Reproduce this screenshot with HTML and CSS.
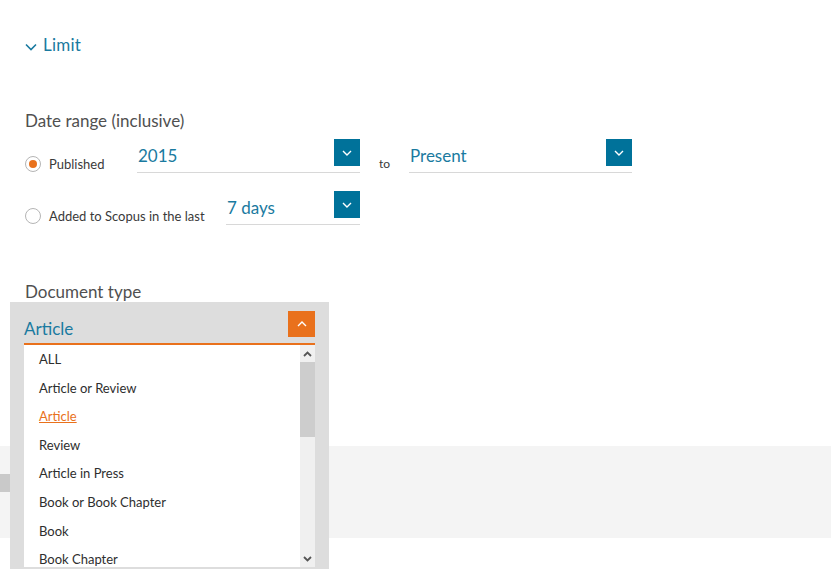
FILE: index.html
```html
<!DOCTYPE html>
<html lang="en">
<head>
<meta charset="utf-8">
<title>Limit</title>
<link rel="stylesheet" href="styles.css">
</head>
<body>
<div class="wrap">
  <div class="limit">
    <svg class="limit-chev" width="12" height="8" viewBox="0 0 12 8"><path d="M1 1.5 L6 6.5 L11 1.5" fill="none" stroke="#1a7aa0" stroke-width="1.6"/></svg>
    <span>Limit</span>
  </div>

  <div class="section-title date-title">Date range (inclusive)</div>

  <div class="row row-first">
    <span class="radio radio-on"></span>
    <span class="radio-label label-published">Published</span>
    <div class="select select-year">
      <span class="select-value">2015</span>
      <span class="select-btn"><svg width="10" height="6" viewBox="0 0 10 6"><path d="M1 1 L5 5 L9 1" fill="none" stroke="#fff" stroke-width="1.4"/></svg></span>
    </div>
    <span class="to">to</span>
    <div class="select select-present">
      <span class="select-value">Present</span>
      <span class="select-btn"><svg width="10" height="6" viewBox="0 0 10 6"><path d="M1 1 L5 5 L9 1" fill="none" stroke="#fff" stroke-width="1.4"/></svg></span>
    </div>
  </div>

  <div class="row row-second">
    <span class="radio"></span>
    <span class="radio-label label-added">Added to Scopus in the last</span>
    <div class="select select-days">
      <span class="select-value">7 days</span>
      <span class="select-btn"><svg width="10" height="6" viewBox="0 0 10 6"><path d="M1 1 L5 5 L9 1" fill="none" stroke="#fff" stroke-width="1.4"/></svg></span>
    </div>
  </div>

  <div class="section-title doc-title">Document type</div>

  <div class="doc-area">
    <div class="doc-panel">
      <div class="doc-head">
        <span class="doc-value">Article</span>
        <span class="doc-btn"><svg width="10" height="6" viewBox="0 0 10 6"><path d="M1 5 L5 1 L9 5" fill="none" stroke="#fff" stroke-width="1.4"/></svg></span>
      </div>
      <div class="doc-list">
        <ul class="options">
          <li>ALL</li>
          <li>Article or Review</li>
          <li class="selected">Article</li>
          <li>Review</li>
          <li>Article in Press</li>
          <li>Book or Book Chapter</li>
          <li>Book</li>
          <li>Book Chapter</li>
        </ul>
        <div class="scrollbar">
          <span class="sb-arrow"><svg width="9" height="6" viewBox="0 0 9 6"><path d="M1 5 L4.5 1.5 L8 5" fill="none" stroke="#555" stroke-width="1.8"/></svg></span>
          <span class="sb-thumb"></span>
          <span class="sb-track"></span>
          <span class="sb-arrow"><svg width="9" height="6" viewBox="0 0 9 6"><path d="M1 1 L4.5 4.5 L8 1" fill="none" stroke="#555" stroke-width="1.8"/></svg></span>
        </div>
      </div>
    </div>
  </div>
</div>

<div class="band">
  <span class="band-tab"></span>
</div>
</body>
</html>
```

FILE: styles.css
```css
* { box-sizing: border-box; }

html, body {
  margin: 0;
  padding: 0;
  background: #fff;
}

body {
  font-family: Lato, "Open Sans", "Liberation Sans", sans-serif;
  color: #505050;
  width: 831px;
  height: 572px;
  overflow: hidden;
}

.wrap {
  padding-left: 25px;
}

.limit {
  margin-top: 35px;
  height: 20px;
  display: flex;
  align-items: center;
  gap: 6px;
  color: #1a7aa0;
  font-size: 17px;
  line-height: 20px;
  letter-spacing: 0.2px;
}

.limit-chev {
  margin-top: 4px;
}

.section-title {
  font-size: 17px;
  line-height: 20px;
  color: #505050;
}

.date-title {
  margin-top: 56px;
}

.row {
  display: flex;
  align-items: flex-end;
  height: 34px;
}

.row-first {
  margin-top: 8px;
}

.row-second {
  margin-top: 18px;
}

.radio {
  width: 16px;
  height: 16px;
  border: 1px solid #b5b5b5;
  border-radius: 50%;
  margin-bottom: 1px;
  display: flex;
  align-items: center;
  justify-content: center;
  flex: none;
}

.radio-on::after {
  content: "";
  width: 8px;
  height: 8px;
  border-radius: 50%;
  background: #e9711c;
}

.radio-label {
  font-size: 13px;
  line-height: 18px;
  color: #3a3a3a;
  margin-left: 8px;
  flex: none;
}

.label-published {
  width: 88px;
}

.label-added {
  width: 177px;
}

.select {
  display: flex;
  justify-content: space-between;
  align-items: flex-start;
  height: 34px;
  border-bottom: 1px solid #d8d8d8;
  flex: none;
}

.select-year {
  width: 223px;
}

.select-present {
  width: 223px;
  margin-left: 18px;
}

.select-days {
  width: 134px;
}

.select-value {
  font-size: 17px;
  line-height: 20px;
  padding-top: 7px;
  padding-left: 1px;
  color: #1a7aa0;
}

.select-btn {
  width: 26px;
  height: 27px;
  background: #00729a;
  display: flex;
  align-items: center;
  justify-content: center;
}

.to {
  font-size: 12px;
  line-height: 18px;
  color: #3a3a3a;
  margin-left: 19px;
  width: 12px;
}

.doc-title {
  margin-top: 57px;
}

.doc-area {
  position: relative;
  height: 144px;
}

.doc-panel {
  position: absolute;
  z-index: 2;
  left: -15px;
  top: 0;
  width: 319px;
  height: 267px;
  background: #dddddd;
  padding: 9px 14px 0 14px;
}

.doc-head {
  display: flex;
  justify-content: space-between;
  align-items: flex-start;
  height: 34px;
  border-bottom: 2px solid #e9711c;
}

.doc-value {
  font-size: 17px;
  line-height: 20px;
  padding-top: 8px;
  color: #1a7aa0;
}

.doc-btn {
  width: 27px;
  height: 26px;
  background: #e9711c;
  display: flex;
  align-items: center;
  justify-content: center;
}

.doc-list {
  display: flex;
  background: #fff;
  height: 222px;
}

.options {
  list-style: none;
  margin: 0;
  padding: 0;
  flex: 1;
}

.options li {
  height: 28.6px;
  line-height: 29px;
  font-size: 13px;
  color: #2e2e2e;
  padding-left: 15px;
}

.options li.selected {
  color: #e9711c;
  text-decoration: underline;
}

.scrollbar {
  width: 15px;
  display: flex;
  flex-direction: column;
  background: #f0f0f0;
}

.sb-arrow {
  height: 17px;
  display: flex;
  align-items: center;
  justify-content: center;
  flex: none;
}

.sb-thumb {
  height: 75px;
  background: #cdcdcd;
  flex: none;
}

.sb-track {
  flex: 1;
}

.band {
  height: 92px;
  background: #f4f4f4;
  padding-top: 28px;
}

.band-tab {
  display: block;
  width: 10px;
  height: 18px;
  background: #c9c9c9;
}
```
